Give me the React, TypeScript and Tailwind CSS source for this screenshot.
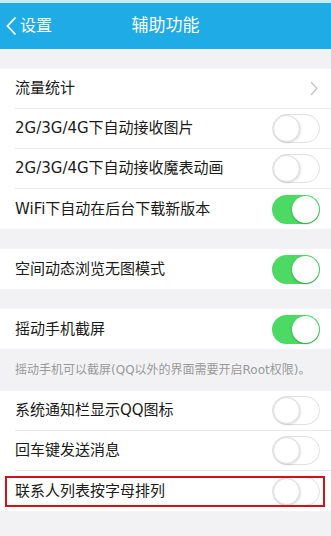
import { ReactNode } from "react"

const FONT = { fontFamily: '"DejaVu Sans", "Noto Sans CJK SC", sans-serif' }

const Toggle = ({ on }: { on: boolean }) => {
  if (on) {
    return (
      <div className="w-[48px] h-[29px] rounded-full bg-[#4cd964] relative flex-shrink-0">
        <div className="absolute right-[1px] top-[1px] w-[27px] h-[27px] rounded-full bg-white shadow-[0_1px_2px_rgba(0,0,0,0.3)]" />
      </div>
    )
  }
  return (
    <div className="w-[48px] h-[29px] rounded-full bg-white border border-[#e0e0e0] relative flex-shrink-0">
      <div className="absolute left-0 top-0 w-[27px] h-[27px] rounded-full bg-white border border-[#dcdcdc] shadow-[1px_1px_2px_rgba(0,0,0,0.12)]" />
    </div>
  )
}

const Row = ({ label, right, last, children }: { label: string; right: ReactNode; last?: boolean; children?: ReactNode }) => (
  <div className="relative bg-white pl-[15px]">
    <div className={`h-[40px] flex items-center justify-between pr-[11px] ${last ? "" : "border-b border-[#e8e8e8]"}`}>
      <span className="text-[15px] text-[#1a1a1a]">{label}</span>
      {right}
    </div>
    {children}
  </div>
)

const Chevron = () => (
  <svg width="8" height="15" viewBox="0 0 8 15" className="mr-[2px]">
    <path d="M1 1l6 6.5L1 14" fill="none" stroke="#c7c7cc" strokeWidth="1.5" />
  </svg>
)

export default function App() {
  return (
    <div className="w-[331px] h-[536px] bg-[#f2f2f4] overflow-hidden" style={FONT}>
      <div className="h-[3px] bg-[#c4ecfa]" />
      {/* Header */}
      <div className="h-[46px] bg-[#1eabe6] relative flex items-center justify-center">
        <div className="absolute left-[6px] top-0 h-full flex items-center text-white">
          <svg width="11" height="20" viewBox="0 0 11 20">
            <path d="M9.5 1.5L1.5 10l8 8.5" fill="none" stroke="white" strokeWidth="1.8" />
          </svg>
          <span className="ml-[3px] text-[16px]">设置</span>
        </div>
        <span className="text-white text-[17px]">辅助功能</span>
      </div>

      <div className="h-[20px]" />
      <div>
        <Row label="流量统计" right={<Chevron />} />
        <Row label="2G/3G/4G下自动接收图片" right={<Toggle on={false} />} />
        <Row label="2G/3G/4G下自动接收魔表动画" right={<Toggle on={false} />} />
        <Row label="WiFi下自动在后台下载新版本" right={<Toggle on />} last />
      </div>

      <div className="h-[20px]" />
      <Row label="空间动态浏览无图模式" right={<Toggle on />} last />

      <div className="h-[20px]" />
      <Row label="摇动手机截屏" right={<Toggle on />} last />
      <div className="h-[42px] flex items-center px-[15px] text-[12px] text-[#999] whitespace-nowrap">
        摇动手机可以截屏(QQ以外的界面需要开启Root权限)。
      </div>

      <div>
        <Row label="系统通知栏显示QQ图标" right={<Toggle on={false} />} />
        <Row label="回车键发送消息" right={<Toggle on={false} />} />
        <Row label="联系人列表按字母排列" right={<Toggle on={false} />} last>
          <div className="absolute left-[5px] top-[5px] w-[320px] h-[31px] border-2 border-[#d0121b] pointer-events-none" />
        </Row>
      </div>
    </div>
  )
}
